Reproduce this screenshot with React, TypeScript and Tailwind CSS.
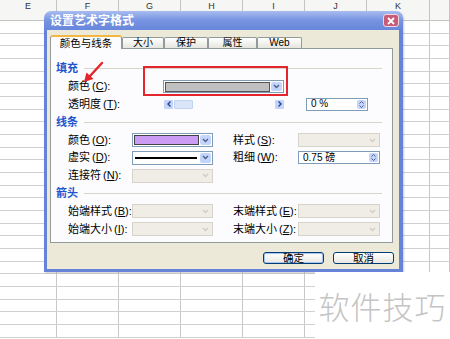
import React from "react"

const colW = ["w-[57px]", "w-[62px]", "w-[62px]", "w-[62px]", "w-[62px]", "w-[62px]", "w-[63px]", "w-[20px]"]
const heads = ["E", "F", "G", "H", "I", "J", "K", ""]

function Sheet() {
  return (
    <div className="flex flex-col">
      <div className="flex h-[21px] border-b border-[#c4c4c4] bg-[#f6f6f4]">
        {heads.map((h, i) => (
          <div
            key={i}
            className={`${colW[i]} shrink-0 border-r border-[#c4c4c4] flex justify-center pt-[2px] text-[9px] leading-none text-[#333]`}
          >
            {h}
          </div>
        ))}
      </div>
      {Array.from({ length: 25 }).map((_, r) => (
        <div key={r} className="flex h-[12.68px] border-b border-[#d0d0d0]">
          {colW.map((w, i) => (
            <div key={i} className={`${w} shrink-0 border-r border-[#c8c8c8]`} />
          ))}
        </div>
      ))}
    </div>
  )
}

function Label({ text, k, className = "" }: { text: string; k: string; className?: string }) {
  return (
    <div className={`shrink-0 text-[11px] leading-none text-black whitespace-nowrap ${className}`}>
      {text}
      <span className="ml-[2px]">(</span>
      <span className="underline">{k}</span>):
    </div>
  )
}

function Chevron({ color }: { color: string }) {
  return (
    <svg width="7" height="5" viewBox="0 0 7 5">
      <path d="M1 1l2.5 2.5L6 1" fill="none" stroke={color} strokeWidth="1.4" />
    </svg>
  )
}

function Combo({ w, h = "h-[14px]", disabled, children }: { w: string; h?: string; disabled?: boolean; children?: React.ReactNode }) {
  return (
    <div className={`${w} ${h} shrink-0 flex border ${disabled ? "border-[#d6d4c8] bg-[#efede5]" : "border-[#7f9db9] bg-white"}`}>
      <div className="flex-1 min-w-0 flex items-center">{children}</div>
      <div className={`w-[11px] m-[1px] flex items-center justify-center rounded-[2px] ${disabled ? "" : "bg-[#c4d4fa]"}`}>
        <Chevron color={disabled ? "#cfcdc4" : "#4d6185"} />
      </div>
    </div>
  )
}

function Spin({ w, text }: { w: string; text: string }) {
  return (
    <div className={`${w} h-[13px] shrink-0 flex border border-[#7f9db9] bg-white`}>
      <div className="flex-1 pl-[4px] flex items-center text-[10px] leading-none text-black">{text}</div>
      <div className="w-[9px] m-[1px] rounded-[2px] bg-[#c4d4fa] flex flex-col items-center justify-center gap-[1px]">
        <svg width="5" height="3" viewBox="0 0 5 3"><path d="M0.5 2.5L2.5 0.5L4.5 2.5" fill="none" stroke="#4d6185" strokeWidth="1" /></svg>
        <svg width="5" height="3" viewBox="0 0 5 3"><path d="M0.5 0.5L2.5 2.5L4.5 0.5" fill="none" stroke="#4d6185" strokeWidth="1" /></svg>
      </div>
    </div>
  )
}

function Section({ title }: { title: string }) {
  return (
    <div className="flex items-center h-[17.8px] pl-[5px] pr-[10px]">
      <span className="text-[11px] leading-none font-bold text-[#1e55cf]">{title}</span>
      <div className="flex-1 h-px bg-[#d8d6ca] ml-[6px]" />
    </div>
  )
}

export default function App() {
  return (
    <div className="relative w-[450px] h-[339px] overflow-hidden bg-white font-['Liberation_Sans','Noto_Sans_CJK_SC',sans-serif]">
      <Sheet />

      {/* dialog */}
      <div className="absolute left-[44px] top-[11px] w-[359px] h-[261px] flex flex-col rounded-t-[7px] overflow-hidden shadow-[1px_1px_2px_rgba(0,0,0,0.2)]">
        <div className="h-[19px] shrink-0 flex items-center justify-between pl-[6px] pr-[4px] bg-gradient-to-b from-[#a8bcef] via-[#7793e1] to-[#6886db]">
          <span className="text-[12px] leading-none font-bold text-white">设置艺术字格式</span>
          <div className="w-[16px] h-[13px] rounded-[3px] bg-[#c85b78] border border-[#f0d8e0] flex items-center justify-center">
            <svg width="8" height="8" viewBox="0 0 8 8">
              <path d="M1 1L7 7M7 1L1 7" stroke="white" strokeWidth="1.8" />
            </svg>
          </div>
        </div>
        <div className="flex-1 flex bg-[#6683da] pl-[3px] pr-[4px] pb-[3px]">
          <div className="flex-1 flex flex-col bg-[#ece9d8] pl-[3px] pr-[6px] pt-[5px]">
            {/* tabs */}
            <div className="flex items-end h-[13px]">
              <div className="relative z-10 -mb-px w-[72px] h-[14px] flex items-center justify-center bg-[#fcfcfe] border-x border-[#919b9c] border-t-2 border-t-[#f3b640] rounded-t-[3px] text-[10.5px] leading-none text-black">
                颜色与线条
              </div>
              {[
                ["大小", "w-[42px]"],
                ["保护", "w-[44px]"],
                ["属性", "w-[49px]"],
                ["Web", "w-[45px]"],
              ].map(([t, w]) => (
                <div
                  key={t}
                  className={`${w} h-[11px] flex items-center justify-center border border-b-0 border-[#919b9c] rounded-t-[2px] bg-gradient-to-b from-white to-[#e6e5de] text-[10px] leading-none text-black`}
                >
                  {t}
                </div>
              ))}
            </div>

            {/* panel */}
            <div className="h-[195px] border border-[#919b9c] bg-[#fcfcfe] pt-[11px]">
              <Section title="填充" />
              <div className="flex items-center h-[17.8px]">
                <Label text="颜色" k="C" className="w-[81px] pl-[17px]" />
                <div className="w-[31px] shrink-0" />
                <Combo w="w-[121px]" h="h-[13px]">
                  <div className="flex-1 h-[10px] ml-[1px] border border-[#555] bg-[#c0c0c0]" />
                </Combo>
              </div>
              <div className="flex items-center h-[17.8px]">
                <Label text="透明度" k="T" className="w-[81px] pl-[17px]" />
                <div className="w-[32px] shrink-0" />
                <div className="w-[120px] h-[9px] shrink-0 flex">
                  <div className="w-[9px] rounded-[1px] bg-[#c5d5f8] flex items-center justify-center">
                    <svg width="4" height="6" viewBox="0 0 4 6"><path d="M3.5 0.5L1 3l2.5 2.5" fill="none" stroke="#22429a" strokeWidth="1.4" /></svg>
                  </div>
                  <div className="w-[19px] ml-[1px] rounded-[1px] bg-[#dbe5fa] border border-[#c2d2f2]" />
                  <div className="flex-1" />
                  <div className="w-[9px] rounded-[1px] bg-[#c5d5f8] flex items-center justify-center">
                    <svg width="4" height="6" viewBox="0 0 4 6"><path d="M0.5 0.5L3 3L0.5 5.5" fill="none" stroke="#22429a" strokeWidth="1.4" /></svg>
                  </div>
                </div>
                <div className="w-[22px] shrink-0" />
                <Spin w="w-[62px]" text="0 %" />
              </div>

              <Section title="线条" />
              <div className="flex items-center h-[17.8px]">
                <Label text="颜色" k="O" className="w-[81px] pl-[17px]" />
                <Combo w="w-[81px]">
                  <div className="flex-1 h-[10px] ml-[1px] border border-[#444] bg-[#cc9cf4]" />
                </Combo>
                <div className="w-[20px] shrink-0" />
                <Label text="样式" k="S" className="w-[65px]" />
                <Combo w="w-[82px]" disabled />
              </div>
              <div className="flex items-center h-[17.8px]">
                <Label text="虚实" k="D" className="w-[81px] pl-[17px]" />
                <Combo w="w-[81px]">
                  <div className="flex-1 h-[2px] mx-[2px] bg-black" />
                </Combo>
                <div className="w-[20px] shrink-0" />
                <Label text="粗细" k="W" className="w-[65px]" />
                <Spin w="w-[82px]" text="0.75 磅" />
              </div>
              <div className="flex items-center h-[17.8px]">
                <Label text="连接符" k="N" className="w-[81px] pl-[17px]" />
                <Combo w="w-[81px]" disabled />
              </div>

              <Section title="箭头" />
              <div className="flex items-center h-[17.8px]">
                <Label text="始端样式" k="B" className="w-[81px] pl-[17px]" />
                <Combo w="w-[81px]" disabled />
                <div className="w-[20px] shrink-0" />
                <Label text="末端样式" k="E" className="w-[65px]" />
                <Combo w="w-[82px]" disabled />
              </div>
              <div className="flex items-center h-[17.8px]">
                <Label text="始端大小" k="I" className="w-[81px] pl-[17px]" />
                <Combo w="w-[81px]" disabled />
                <div className="w-[20px] shrink-0" />
                <Label text="末端大小" k="Z" className="w-[65px]" />
                <Combo w="w-[82px]" disabled />
              </div>
            </div>

            {/* buttons */}
            <div className="mt-[9px] flex justify-end gap-[9px] -mr-px">
              <div className="w-[61px] h-[12px] rounded-[3px] border border-[#003c74] bg-gradient-to-b from-white to-[#e9e8e2] shadow-[inset_0_0_0_1px_#a9c4f0] flex items-center justify-center text-[10.5px] leading-none text-black">
                确定
              </div>
              <div className="w-[61px] h-[12px] rounded-[3px] border border-[#003c74] bg-gradient-to-b from-white to-[#e9e8e2] flex items-center justify-center text-[10.5px] leading-none text-black">
                取消
              </div>
            </div>
          </div>
        </div>
      </div>

      {/* annotation: red highlight + arrow */}
      <div className="absolute left-[143px] top-[66px] w-[145px] h-[30px] border-2 border-[#e2262b]" />
      <svg className="absolute left-[80px] top-[60px]" width="26" height="26" viewBox="0 0 26 26">
        <path d="M22 3L10 16" stroke="#e2262b" strokeWidth="2.4" strokeLinecap="round" />
        <path d="M4 22L6.5 12.5L13.5 19Z" fill="#e2262b" />
      </svg>

      {/* watermark */}
      <div className="absolute left-[315px] top-[272px] w-[135px] h-[67px] bg-white flex items-center justify-center text-[31px] leading-none font-light tracking-[1px] text-[#c4c4c4] font-['Noto_Sans_CJK_SC',sans-serif]">
        软件技巧
      </div>
    </div>
  )
}
